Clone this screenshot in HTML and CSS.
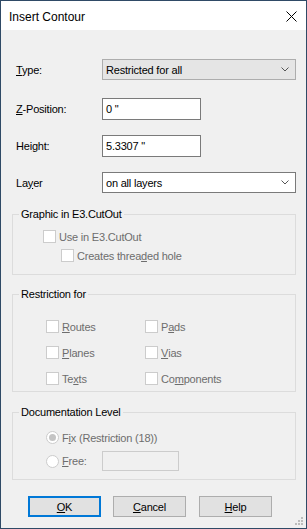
FILE: index.html
```html
<!DOCTYPE html>
<html>
<head>
    <title>Insert Contour</title>
    <link rel="stylesheet" href="styles.css">
</head>
<body>
    <div class="window">
        <div class="titlebar">
            <span class="title">Insert Contour</span>
            <svg class="close" width="11" height="11" viewBox="0 0 11 11">
                <path d="M0.5 0.5 L10.5 10.5 M10.5 0.5 L0.5 10.5" stroke="#000" stroke-width="1" fill="none"/>
            </svg>
        </div>

        <div class="dialog">
            <div class="row row-type">
                <label class="lbl"><u>T</u>ype:</label>
                <div class="combo combo-ro">
                    <span>Restricted for all</span>
                    <svg width="8" height="5" viewBox="0 0 8 5"><path d="M0.5 0.5 L4 4 L7.5 0.5" stroke="#555" fill="none"/></svg>
                </div>
            </div>
            <div class="row row-z">
                <label class="lbl"><u>Z</u>-Position:</label>
                <div class="textbox">0 "</div>
            </div>
            <div class="row row-h">
                <label class="lbl">Hei<u>g</u>ht:</label>
                <div class="textbox">5.3307 "</div>
            </div>
            <div class="row row-layer">
                <label class="lbl">La<u>y</u>er</label>
                <div class="combo">
                    <span>on all layers</span>
                    <svg width="8" height="5" viewBox="0 0 8 5"><path d="M0.5 0.5 L4 4 L7.5 0.5" stroke="#555" fill="none"/></svg>
                </div>
            </div>

            <!-- Gruppen -->
            <fieldset class="group group-graphic">
                <legend>Graphic in E3.CutOut</legend>
                <div class="check check-use"><span class="box"></span>Use in E3.CutOut</div>
                <div class="check check-thread"><span class="box"></span>Creates threa<u>d</u>ed hole</div>
            </fieldset>

            <fieldset class="group group-restrict">
                <legend>Restriction for</legend>
                <div class="check-grid">
                    <div class="check"><span class="box"></span><u>R</u>outes</div>
                    <div class="check"><span class="box"></span>P<u>a</u>ds</div>
                    <div class="check"><span class="box"></span><u>P</u>lanes</div>
                    <div class="check"><span class="box"></span><u>V</u>ias</div>
                    <div class="check"><span class="box"></span>Te<u>x</u>ts</div>
                    <div class="check"><span class="box"></span>Co<u>m</u>ponents</div>
                </div>
            </fieldset>

            <fieldset class="group group-doc">
                <legend>Documentation Level</legend>
                <div class="radio radio-fix"><span class="dot checked"></span>F<u>i</u>x (Restriction (18))</div>
                <div class="radio radio-free">
                    <span class="dot"></span><span class="free-lbl"><u>F</u>ree:</span>
                    <div class="textbox textbox-off"></div>
                </div>
            </fieldset>

            <div class="buttons">
                <div class="btn btn-default"><u>O</u>K</div>
                <div class="btn"><u>C</u>ancel</div>
                <div class="btn btn-help"><u>H</u>elp</div>
            </div>
        </div>

        <svg class="grip" width="9" height="9" viewBox="0 0 9 9">
            <rect x="6" y="0" width="2" height="2" fill="#bcbcbc"/>
            <rect x="3" y="3" width="2" height="2" fill="#bcbcbc"/>
            <rect x="6" y="3" width="2" height="2" fill="#bcbcbc"/>
            <rect x="0" y="6" width="2" height="2" fill="#bcbcbc"/>
            <rect x="3" y="6" width="2" height="2" fill="#bcbcbc"/>
            <rect x="6" y="6" width="2" height="2" fill="#bcbcbc"/>
        </svg>
    </div>
</body>
</html>
```

FILE: styles.css
```css
body {
    margin: 0;
    padding: 0;
    background-color: #f0f0f0;
    font-family: "Liberation Sans", Arial, sans-serif;
    font-size: 11px;
    color: #000;
}

.window {
    position: relative;
    width: 307px;
    height: 529px;
    box-sizing: border-box;
    border: 1px solid #2f4a66;
    background-color: #f0f0f0;
}

.titlebar {
    height: 29px;
    background-color: #fff;
    display: flex;
    align-items: center;
    justify-content: space-between;
    padding: 0 9px 0 8px;
}

.title {
    font-size: 12px;
    padding-top: 2px;
}

.close {
    margin-top: 2px;
}

.dialog {
    padding: 29px 10px 0 11px;
    letter-spacing: -0.2px;
}

/* Zeilen mit Beschriftung */
.row {
    display: flex;
    align-items: center;
    padding-left: 4px;
}

.lbl {
    width: 86px;
    flex: none;
}

.row-type { height: 21px; }
.row-z { height: 22px; margin-top: 18px; }
.row-h { height: 22px; margin-top: 15px; }
.row-layer { height: 21px; margin-top: 15px; }

.combo {
    flex: 1;
    height: 21px;
    box-sizing: border-box;
    border: 1px solid #7a7a7a;
    background-color: #fff;
    display: flex;
    align-items: center;
    justify-content: space-between;
    padding: 0 6px 0 3px;
}

.combo-ro {
    background-color: #e5e5e5;
    border-color: #adadad;
}

.textbox {
    width: 99px;
    height: 22px;
    box-sizing: border-box;
    border: 1px solid #7a7a7a;
    background-color: #fff;
    padding: 0 3px;
    display: flex;
    align-items: center;
}

.textbox-off {
    width: 77px;
    height: 20px;
    border-color: #cccccc;
    background-color: #f0f0f0;
}

/* Gruppenrahmen */
.group {
    margin: 0;
    padding: 0;
    border: 1px solid #dcdcdc;
    min-width: 0;
}

.group legend {
    margin-left: 6px;
    padding: 0 2px;
    line-height: 13px;
}

.group-graphic { margin-top: 15px; padding-bottom: 12px; }
.group-restrict { margin-top: 13px; padding-bottom: 6px; }
.group-doc { margin-top: 14px; padding-bottom: 8px; }

.check, .radio {
    display: flex;
    align-items: center;
    height: 13px;
    color: #6d6d6d;
}

.box {
    width: 13px;
    height: 13px;
    box-sizing: border-box;
    border: 1px solid #cccccc;
    background-color: #fff;
    margin-right: 3px;
    flex: none;
}

.check-use { margin: 9px 0 0 30px; }
.check-thread { margin: 6px 0 0 48px; }

.check-grid {
    display: grid;
    grid-template-columns: 99px auto;
    row-gap: 13px;
    margin: 19px 0 0 33px;
}

.dot {
    width: 13px;
    height: 13px;
    box-sizing: border-box;
    border: 1px solid #cccccc;
    border-radius: 50%;
    background-color: #fff;
    margin-right: 3px;
    flex: none;
    display: flex;
    align-items: center;
    justify-content: center;
}

.dot.checked::after {
    content: "";
    width: 7px;
    height: 7px;
    border-radius: 50%;
    background-color: #c4c4c4;
}

.radio-fix { margin: 12px 0 0 33px; }

.radio-free {
    height: 20px;
    margin: 7px 0 0 33px;
}

.free-lbl {
    width: 40px;
}

/* Schaltflächen */
.buttons {
    display: flex;
    gap: 12px;
    margin-top: 16px;
    padding-left: 16px;
}

.btn {
    width: 73px;
    height: 21px;
    box-sizing: border-box;
    border: 1px solid #adadad;
    background-color: #e1e1e1;
    display: flex;
    align-items: center;
    justify-content: center;
}

.btn-default {
    border: 2px solid #0078d7;
}

.btn-help {
    margin-left: 1px;
}

.grip {
    position: absolute;
    right: 2px;
    bottom: 2px;
}
```
